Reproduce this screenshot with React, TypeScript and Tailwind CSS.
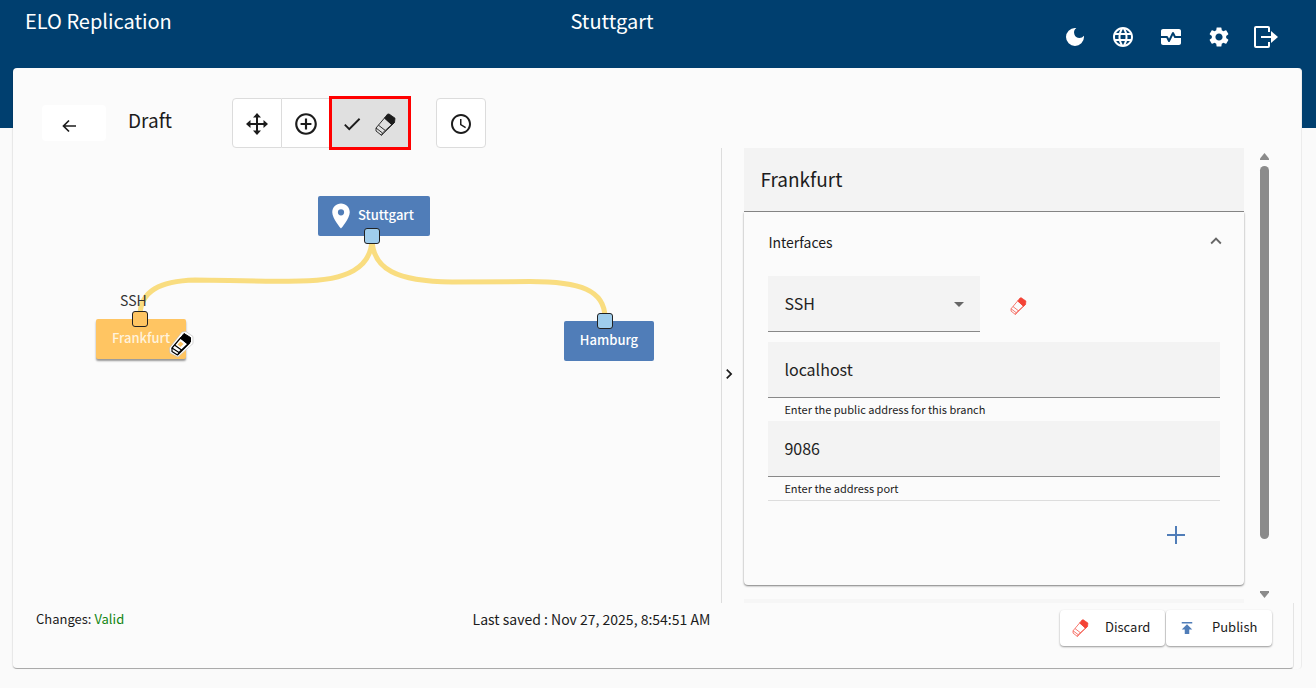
import {
  MdAddCircleOutline,
  MdArrowDropDown,
  MdCheck,
  MdChevronRight,
  MdDarkMode,
  MdKeyboardArrowUp,
  MdLanguage,
  MdLocationOn,
  MdMonitorHeart,
  MdPublish,
  MdSchedule,
  MdSettings,
} from "react-icons/md";

type IconProps = { className?: string };

function EraserIcon({ className }: IconProps) {
  return (
    <svg
      viewBox="0 0 21 23"
      className={className}
      fill="none"
      stroke="currentColor"
      strokeWidth="0.900"
      strokeLinejoin="round"
    >
      <path d="M9.500 5L12.500 1.200L14 1L20 5.200L19.500 9.500L16.800 11.800Z" fill="currentColor" />
      <path d="M1 15L9.500 5L16.800 11.500L7.500 20Z" />
      <path d="M1 15V18L6.500 22.300L19.500 9.500M7.500 20L6.500 22.300M3.500 12.200L10.300 17.500" />
    </svg>
  );
}

function MoveIcon({ className }: IconProps) {
  return (
    <svg viewBox="0 0 24 24" className={className} fill="currentColor">
      <path d="M12 1l4 4.500h-3V11h5.500V8L23 12l-4.500 4v-3H13v5.500h3L12 23l-4-4.500h3V13H5.500v3L1 12l4.500-4v3H11V5.500H8z" />
    </svg>
  );
}

function ExitIcon({ className }: IconProps) {
  return (
    <svg viewBox="0 0 26 24" className={className} fill="none" stroke="currentColor" strokeWidth="2">
      <path d="M16 7V3a1 1 0 0 0-1-1H3a1 1 0 0 0-1 1v18a1 1 0 0 0 1 1h12a1 1 0 0 0 1-1v-4M8 12h10" />
      <path d="M18 6l7 6-7 6z" fill="currentColor" stroke="none" />
    </svg>
  );
}

function BackIcon({ className }: IconProps) {
  return (
    <svg viewBox="0 0 14 14" className={className} fill="none" stroke="currentColor" strokeWidth="1.700">
      <path d="M14 7H1.500M7 1.500L1.500 7 7 12.500" />
    </svg>
  );
}

const headerActions = [
  { label: "Dark mode", icon: <MdDarkMode className="size-6" /> },
  { label: "Language", icon: <MdLanguage className="size-6" /> },
  { label: "Monitoring", icon: <MdMonitorHeart className="size-6" /> },
  { label: "Settings", icon: <MdSettings className="size-6" /> },
  { label: "Log out", icon: <ExitIcon className="h-6 w-[26px]" /> },
];

function Header() {
  return (
    <header className="h-32 bg-[#003f6f] text-white">
      <div className="grid grid-cols-[43.5%_1fr_auto] items-start pl-[25px] pr-[37px]">
        <h1 className="pt-[7px] text-xl leading-7">ELO Replication</h1>
        <p className="pt-[7px] text-xl leading-7">Stuttgart</p>
        <nav className="flex pt-[25px]">
          {headerActions.map((action) => (
            <button
              key={action.label}
              aria-label={action.label}
              className="flex h-6 w-12 items-center justify-end"
            >
              {action.icon}
            </button>
          ))}
        </nav>
      </div>
    </header>
  );
}

function Toolbar() {
  return (
    <div className="flex h-[50px] items-center pl-[29px]">
      <button
        aria-label="Back"
        className="flex h-9 w-16 items-center rounded bg-white pl-5 pt-1.5"
      >
        <BackIcon className="size-3.5" />
      </button>
      <h2 className="ml-[22px] w-[104px] pb-1.5 text-[19px] leading-7">Draft</h2>
      <div className="flex items-center">
        <button
          aria-label="Move"
          className="flex h-[50px] w-[50px] items-center justify-center rounded-l border border-[#dcdcdc] bg-white pt-0.5"
        >
          <MoveIcon className="size-6" />
        </button>
        <button
          aria-label="Add branch"
          className="flex h-[50px] w-[47px] items-center justify-center border-y border-[#dcdcdc] bg-white pt-0.5"
        >
          <MdAddCircleOutline className="size-[26px]" />
        </button>
        <button
          aria-label="Delete branch"
          aria-pressed="true"
          className="flex h-[54px] w-[82px] items-center gap-3 border-[3px] border-[#f00] bg-[#e0e0e0] pl-[9px] pt-0.5"
        >
          <MdCheck className="size-[22px]" />
          <EraserIcon className="h-[23px] w-[21px]" />
        </button>
      </div>
      <button
        aria-label="Schedule"
        className="ml-[25px] flex h-[50px] w-[50px] items-center justify-center rounded border border-[#dcdcdc] bg-white pt-0.5"
      >
        <MdSchedule className="size-6" />
      </button>
    </div>
  );
}

function Canvas() {
  return (
    <div className="relative w-[55%] shrink-0 text-[13px] font-medium">
      <svg className="absolute left-0 top-0 h-full w-full" fill="none" stroke="#f9dd80" strokeWidth="5">
        <path d="M359 90C359 120 334 132.500 287 133C242 134 212 132 182 132C147 133 127 143 127 168" />
        <path d="M359 90C359 122 385 133.500 439 134L517 133.500C567 133.500 592 142 592 170" />
      </svg>

      <div className="absolute left-[305px] top-12 flex h-10 w-28 items-center rounded-xs bg-[#507db8] pl-2 text-white">
        <MdLocationOn className="size-[30px]" />
        <span className="pb-0.5 pl-0.5">Stuttgart</span>
      </div>
      <span className="absolute left-[351px] top-20 size-4 rounded-[3px] border border-[#222] bg-[#9fcdec]" />

      <div className="absolute left-[551px] top-[173px] flex h-10 w-[90px] items-center justify-center rounded-xs bg-[#507db8] pb-0.5 text-white">
        Hamburg
      </div>
      <span className="absolute left-[584px] top-[165px] size-4 rounded-[3px] border border-[#222] bg-[#9fcdec]" />

      <div className="absolute left-[83px] top-[171px] flex h-10 w-[90px] items-center justify-center rounded-xs bg-[#ffc562] pb-0.5 text-[#fff3dc] shadow-[0_2px_2px_rgba(0,0,0,0.4)]">
        Frankfurt
      </div>
      <span className="absolute left-[119px] top-[163px] size-4 rounded-[3px] border border-[#222] bg-[#ffc562]" />
      <span className="absolute left-[107px] top-[142px] text-sm font-normal text-[#333]">SSH</span>
      <svg viewBox="0 0 26 28" className="absolute left-[155px] top-[182px] h-7 w-[26px]" strokeLinejoin="round">
        <path d="M1.500 18L14 2l4-.5 7 5v7L10 27l-8-4z" fill="#fff" stroke="#bbb" strokeWidth=".6" />
        <path d="M4 18L12.500 8l7.500 6-9 8.500z" fill="#fff" stroke="#000" strokeWidth="1.200" />
        <path d="M12.500 8L16 3.500L22.500 7.500V12L20 14z" fill="#000" stroke="#000" />
        <path d="M4 18v3.500l5.500 3.500L22 12.500M11 22.500l-1.500 2.500M6.500 15l7 5" fill="none" stroke="#000" strokeWidth="1.200" />
        <path d="M12.500 11.500l3 2.500-3 3-3-2.500z" fill="#ffc562" />
      </svg>
    </div>
  );
}

const fieldClass =
  "block h-14 w-full border-b border-[#888] bg-[#f3f3f3] px-4 pb-0.5 text-base text-[#222] outline-none";

function SidePanel() {
  return (
    <div className="flex min-w-0 flex-1 border-l border-[#ddd]">
      <button aria-label="Collapse panel" className="flex w-[22px] items-center pb-1">
        <MdChevronRight className="-ml-[3px] size-5" />
      </button>
      <div className="min-w-0 flex-1">
        <input
          aria-label="Branch name"
          defaultValue="Frankfurt"
          className="block h-16 w-full border-b border-[#888] bg-[#f3f3f3] px-4 pb-0.5 text-[19px] outline-none"
        />
        <section className="h-[373px] rounded-b px-6 shadow-[0_1px_2px_rgba(0,0,0,0.5)]">
          <button
            aria-expanded="true"
            className="flex h-16 w-full items-center justify-between pb-1 text-sm"
          >
            Interfaces
            <MdKeyboardArrowUp className="-mr-[7px] mb-0.5 size-[22px] text-[#666]" stroke="currentColor" />
          </button>
          <div className="flex items-center">
            <div className="relative w-[212px]">
              <select aria-label="Protocol" className={`${fieldClass} appearance-none`}>
                <option>SSH</option>
              </select>
              <MdArrowDropDown className="pointer-events-none absolute right-[9px] top-4 size-6 text-[#666]" />
            </div>
            <button aria-label="Remove interface" className="ml-[30px] pt-1">
              <EraserIcon className="h-[18px] w-[17px] text-[#f44336]" />
            </button>
          </div>
          <div className="mt-2.5">
            <input
              aria-label="Public address"
              aria-describedby="address-hint"
              defaultValue="localhost"
              className={fieldClass}
            />
            <p id="address-hint" className="h-[23px] px-4 text-[11px] leading-[22px]">
              Enter the public address for this branch
            </p>
          </div>
          <div className="border-b border-[#ddd]">
            <input
              aria-label="Port"
              aria-describedby="port-hint"
              defaultValue="9086"
              className={fieldClass}
            />
            <p id="port-hint" className="h-[23px] px-4 text-[11px] leading-[22px]">
              Enter the address port
            </p>
          </div>
          <div className="flex justify-end pr-[35px] pt-[25px]">
            <button aria-label="Add interface" className="text-[#507db8]">
              <svg viewBox="0 0 18 18" className="size-[18px]" stroke="currentColor" strokeWidth="2">
                <path d="M9 0v18M0 9h18" />
              </svg>
            </button>
          </div>
        </section>
        <div className="mt-3.5 h-1 bg-[#f6f6f6]" />
      </div>
      <div className="ml-4 mr-8 flex w-[9px] flex-col items-center py-[5px] text-[#8b8b8b]">
        <svg viewBox="0 0 9 7" className="h-[7px] w-[9px]" fill="currentColor">
          <path d="M4.500 0L9 5.500V7H0V5.500z" />
        </svg>
        <div className="mb-[52px] mt-1.5 w-full flex-1 rounded-full bg-[#8b8b8b]" />
        <svg viewBox="0 0 9 7" className="h-[7px] w-[9px]" fill="currentColor">
          <path d="M4.500 7L9 1.500V0H0v1.500z" />
        </svg>
      </div>
    </div>
  );
}

function Footer() {
  return (
    <footer className="mr-[7px] flex h-[66px] items-start rounded-b border-b border-r border-b-[#aaa] border-r-[#e4e4e4] pl-[23px] pr-[21px] pt-[7px] text-[13px]">
      <p className="w-[35%] leading-[18px]">
        Changes: <span className="text-[#118511]">Valid</span>
      </p>
      <p className="flex-1 pl-1 text-sm leading-[18px]">Last saved : Nov 27, 2025, 8:54:51 AM</p>
      <div className="flex gap-px">
        <button className="flex h-9 w-[105px] items-center rounded bg-white pl-3 shadow-[0_1px_2px_rgba(0,0,0,0.4)]">
          <EraserIcon className="h-[18px] w-[17px] text-[#f44336]" />
          <span className="pb-0.5 pl-4">Discard</span>
        </button>
        <button className="flex h-9 w-[106px] items-center rounded bg-white pl-3 shadow-[0_1px_2px_rgba(0,0,0,0.4)]">
          <MdPublish className="size-[18px] text-[#507db8]" />
          <span className="pb-0.5 pl-4">Publish</span>
        </button>
      </div>
    </footer>
  );
}

export default function App() {
  return (
    <div className="min-h-screen bg-[#fafafa] font-['Noto_Sans_CJK_SC',sans-serif] text-[#1c1c1c]">
      <Header />
      <main className="ml-[13px] mr-3.5 -mt-[60px] rounded border-r border-[#ececec] bg-[#fbfbfb] pt-[30px] shadow-[-1px_0_1px_rgba(0,0,0,0.08)]">
        <Toolbar />
        <div className="flex">
          <Canvas />
          <SidePanel />
        </div>
        <Footer />
      </main>
    </div>
  );
}
